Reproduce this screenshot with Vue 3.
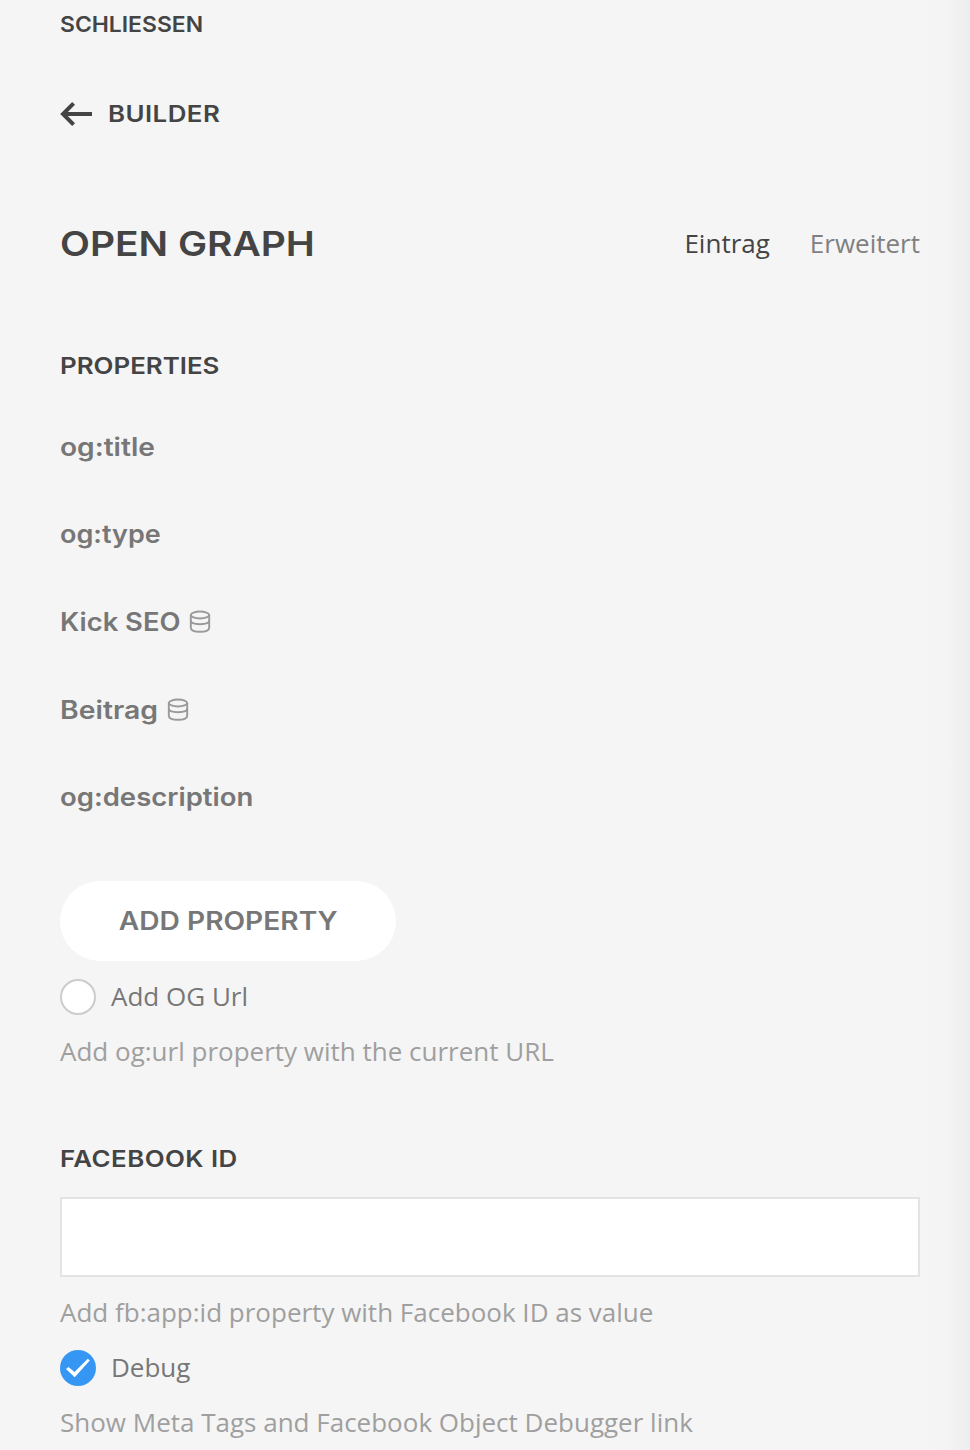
<script setup>
import { ref } from 'vue'

const properties = [
  { name: 'og:title', key: 'title' },
  { name: 'og:type', key: 'type' },
  { name: 'Kick SEO', key: 'kick', dynamic: true },
  { name: 'Beitrag', key: 'beitrag', dynamic: true },
  { name: 'og:description', key: 'description' },
]
const addUrl = ref(false)
const debug = ref(true)
const facebookId = ref('')
</script>

<template>
  <main class="panel">
    <a class="close"><span class="wide">SCHLIESSEN</span></a>
    <a class="back">
      <svg class="arrow" viewBox="0 0 32 26" width="32" height="26">
        <path d="M13.6 2.4 3 13l10.6 10.6M3 13h29" />
      </svg>
      <span class="wide">BUILDER</span>
    </a>

    <header class="head">
      <h1><span class="wide">OPEN GRAPH</span></h1>
      <nav class="tabs">
        <a class="active">Eintrag</a>
        <a>Erweitert</a>
      </nav>
    </header>

    <h2 class="properties"><span class="wide">PROPERTIES</span></h2>
    <ul class="list">
      <li v-for="item in properties" :key="item.key">
        <span class="wide" :class="item.key">{{ item.name }}</span>
        <svg v-if="item.dynamic" class="db" viewBox="0 0 22 24" width="22" height="24">
          <ellipse cx="11" cy="5" rx="9.200" ry="3.500" />
          <path d="M1.800 5v12.500c0 3.400 3 4.300 9.200 4.300s9.200-.900 9.200-4.300V5M1.800 10.600c0 2.700 4 3.700 9.200 3.700s9.200-1 9.200-3.700" />
        </svg>
      </li>
    </ul>

    <button class="add"><span class="wide">ADD PROPERTY</span></button>

    <label class="check first">
      <input v-model="addUrl" type="checkbox" />
      <span class="box" :class="{ on: addUrl }"></span>
      <span class="text">Add OG Url</span>
    </label>
    <p class="help h-url">Add og:url property with the current URL</p>

    <h2 class="facebook"><span class="wide">FACEBOOK ID</span></h2>
    <input v-model="facebookId" class="field" type="text" />
    <p class="help h-fb">Add fb:app:id property with Facebook ID as value</p>

    <label class="check second">
      <input v-model="debug" type="checkbox" />
      <span class="box" :class="{ on: debug }">
        <svg v-if="debug" viewBox="0 0 36 36" width="36" height="36">
          <path d="M6 19 8.500 16.900l6 5.200L27.800 8.800l2 1.700L14.700 27.200z" />
        </svg>
      </span>
      <span class="text">Debug</span>
    </label>
    <p class="help h-debug">Show Meta Tags and Facebook Object Debugger link</p>
  </main>
</template>

<style>
body {
  margin: 0;
  background: #f5f5f5;
}
</style>

<style scoped>
.panel {
  box-sizing: border-box;
  width: 970px;
  height: 1450px;
  padding: 4px 50px 0 60px;
  overflow: hidden;
  display: flex;
  flex-direction: column;
  align-items: flex-start;
  background: linear-gradient(to right, #f5f5f5 930px, #f3f3f3 950px, #ededed 970px);
  color: #444;
  font: 26px/40px "Open Sans", sans-serif;
  white-space: nowrap;
}
.close,
.back,
h1,
h2,
.list,
.add {
  font-family: Inter, sans-serif;
  font-weight: 590;
  margin: 0;
}
.wide {
  display: inline-block;
  transform: scaleX(1.125);
  transform-origin: left;
}
.close {
  height: 40px;
  font-size: 21.5px;
}
.close .wide {
  transform: scaleX(1.065);
}
.back {
  height: 40px;
  margin-top: 50px;
  display: flex;
  align-items: center;
  gap: 16px;
  font-size: 23px;
  letter-spacing: 0.4px;
}
.arrow path {
  fill: none;
  stroke: #444;
  stroke-width: 4;
}
.head {
  width: 100%;
  height: 50px;
  margin-top: 84px;
  display: flex;
  align-items: center;
  justify-content: space-between;
}
h1 {
  font-size: 34.6px;
}
.tabs {
  display: flex;
  gap: 40px;
}
.tabs a {
  color: #808080;
}
.tabs .active {
  color: #444;
}
h2 {
  height: 40px;
  font-size: 23px;
}
.properties {
  margin-top: 78px;
}
.list {
  list-style: none;
  padding: 0;
  margin-top: 40.8px;
  color: #777;
  font-size: 25px;
}
.list li {
  height: 40px;
  margin-bottom: 47.6px;
  display: flex;
  align-items: center;
}
.type {
  transform: scaleX(1.08);
}
.kick {
  transform: scaleX(1.095);
}
.beitrag {
  transform: scaleX(1.135);
  margin-right: 2px;
}
.description {
  transform: scaleX(1.1);
}
.db {
  margin-left: 19px;
  fill: none;
  stroke: #999;
  stroke-width: 1.9;
}
.add {
  height: 80px;
  width: 336px;
  margin-top: 16.2px;
  border: 0;
  border-radius: 40px;
  padding: 0;
  background: #fff;
  color: #777;
  font-size: 25px;
}
.add .wide {
  transform-origin: center;
}
.check {
  height: 40px;
  display: flex;
  align-items: center;
  gap: 15px;
  color: #777;
}
.check input {
  display: none;
}
.text {
  margin-bottom: 2px;
}
.box {
  box-sizing: border-box;
  width: 36px;
  height: 36px;
  border: 2px solid #ccc;
  border-radius: 50%;
  background: #fff;
}
.box.on {
  border: 0;
  background: #3696f3;
}
.box svg {
  display: block;
  fill: #fff;
}
.first {
  margin-top: 16px;
}
.help {
  height: 40px;
  margin: 0;
  color: #9f9f9f;
}
.h-url {
  margin-top: 14px;
}
.facebook {
  margin-top: 68px;
  letter-spacing: 0.4px;
}
.field {
  box-sizing: border-box;
  width: 860px;
  height: 80px;
  margin-top: 18px;
  border: 2px solid #e4e4e4;
  border-radius: 0;
  background: #fff;
}
.h-fb {
  margin-top: 15px;
}
.second {
  margin-top: 16px;
}
.h-debug {
  margin-top: 14px;
}
</style>
